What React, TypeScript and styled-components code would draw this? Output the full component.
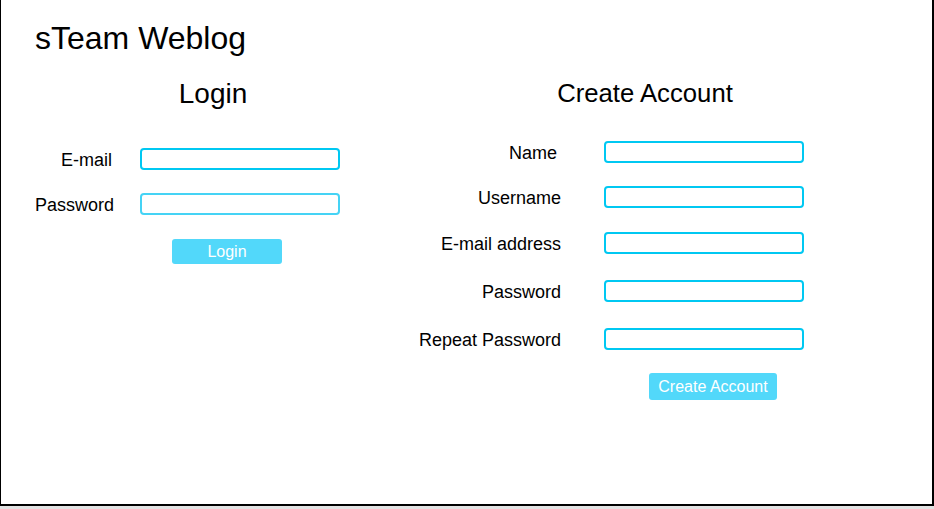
import React from "react";
import styled, { createGlobalStyle } from "styled-components";

const Global = createGlobalStyle`
  html, body {
    margin: 0;
    padding: 0;
    background: #e2e2e2;
  }
  body {
    font-family: "Liberation Sans", Arial, sans-serif;
    color: #000;
  }
`;

const Page = styled.div`
  box-sizing: border-box;
  width: 934px;
  height: 506px;
  background: #fff;
  border-left: 1px solid #000;
  border-right: 2px solid #000;
  border-bottom: 2px solid #000;
  overflow: hidden;
`;

const Header = styled.h1`
  margin: 20px 0 0 34px;
  font-size: 32px;
  font-weight: normal;
  line-height: 37px;
`;

const Columns = styled.div`
  display: flex;
  align-items: flex-start;
`;

const Column = styled.section<{ $width: number; $top: number }>`
  flex: 0 0 ${(p) => p.$width}px;
  margin-top: ${(p) => p.$top}px;
  display: flex;
  flex-direction: column;
`;

const Title = styled.h2<{ $size: number; $pad: number }>`
  margin: 0;
  padding-left: ${(p) => p.$pad}px;
  font-size: ${(p) => p.$size}px;
  font-weight: normal;
  line-height: 30px;
  text-align: center;
`;

const Form = styled.form<{ $label: number; $gap: number; $left: number }>`
  display: grid;
  grid-template-columns: ${(p) => p.$label}px 200px;
  column-gap: ${(p) => p.$gap}px;
  align-items: center;
  margin-left: ${(p) => p.$left}px;
`;

const Label = styled.label<{ $top: number; $pad?: number }>`
  grid-column: 1;
  margin-top: ${(p) => p.$top + 2}px;
  padding-right: ${(p) => p.$pad ?? 0}px;
  font-size: 18px;
  line-height: 20px;
  text-align: right;
  white-space: nowrap;
`;

const Input = styled.input<{ $top: number; $soft?: boolean }>`
  grid-column: 2;
  box-sizing: border-box;
  width: 200px;
  height: 22px;
  margin: ${(p) => p.$top}px 0 0 0;
  padding: 0 4px;
  border: 2px solid ${(p) => (p.$soft ? "#45d3f5" : "#00c8f2")};
  border-radius: 4px;
  background: #fff;
  outline: none;
  font-family: inherit;
`;

const Button = styled.button<{ $top: number; $left: number; $width: number; $height: number }>`
  grid-column: 2;
  justify-self: start;
  box-sizing: border-box;
  width: ${(p) => p.$width}px;
  height: ${(p) => p.$height}px;
  margin: ${(p) => p.$top}px 0 0 ${(p) => p.$left}px;
  padding: 0;
  border: none;
  border-radius: 3px;
  background: #52d8fa;
  color: #fff;
  font-family: "Liberation Sans", Arial, sans-serif;
  font-size: 16px;
  cursor: pointer;
`;

export default function App() {
  return (
    <>
      <Global />
      <Page>
        <Header>sTeam Weblog</Header>
        <Columns>
          <Column $width={399} $top={22}>
            <Title $size={28} $pad={25}>Login</Title>
            <Form $label={79} $gap={26} $left={34} onSubmit={(e) => e.preventDefault()}>
              <Label $top={39} $pad={2}>E-mail</Label>
              <Input $top={39} type="email" />
              <Label $top={23}>Password</Label>
              <Input $top={23} $soft type="password" />
              <Button $top={24} $left={32} $width={110} $height={25}>Login</Button>
            </Form>
          </Column>
          <Column $width={490} $top={21}>
            <Title $size={25.7} $pad={0}>Create Account</Title>
            <Form $label={142} $gap={43} $left={19} onSubmit={(e) => e.preventDefault()}>
              <Label $top={33} $pad={4}>Name</Label>
              <Input $top={33} type="text" />
              <Label $top={23}>Username</Label>
              <Input $top={23} type="text" />
              <Label $top={24}>E-mail address</Label>
              <Input $top={24} type="email" />
              <Label $top={26}>Password</Label>
              <Input $top={26} type="password" />
              <Label $top={26}>Repeat Password</Label>
              <Input $top={26} type="password" />
              <Button $top={23} $left={45} $width={128} $height={27}>Create Account</Button>
            </Form>
          </Column>
        </Columns>
      </Page>
    </>
  );
}
